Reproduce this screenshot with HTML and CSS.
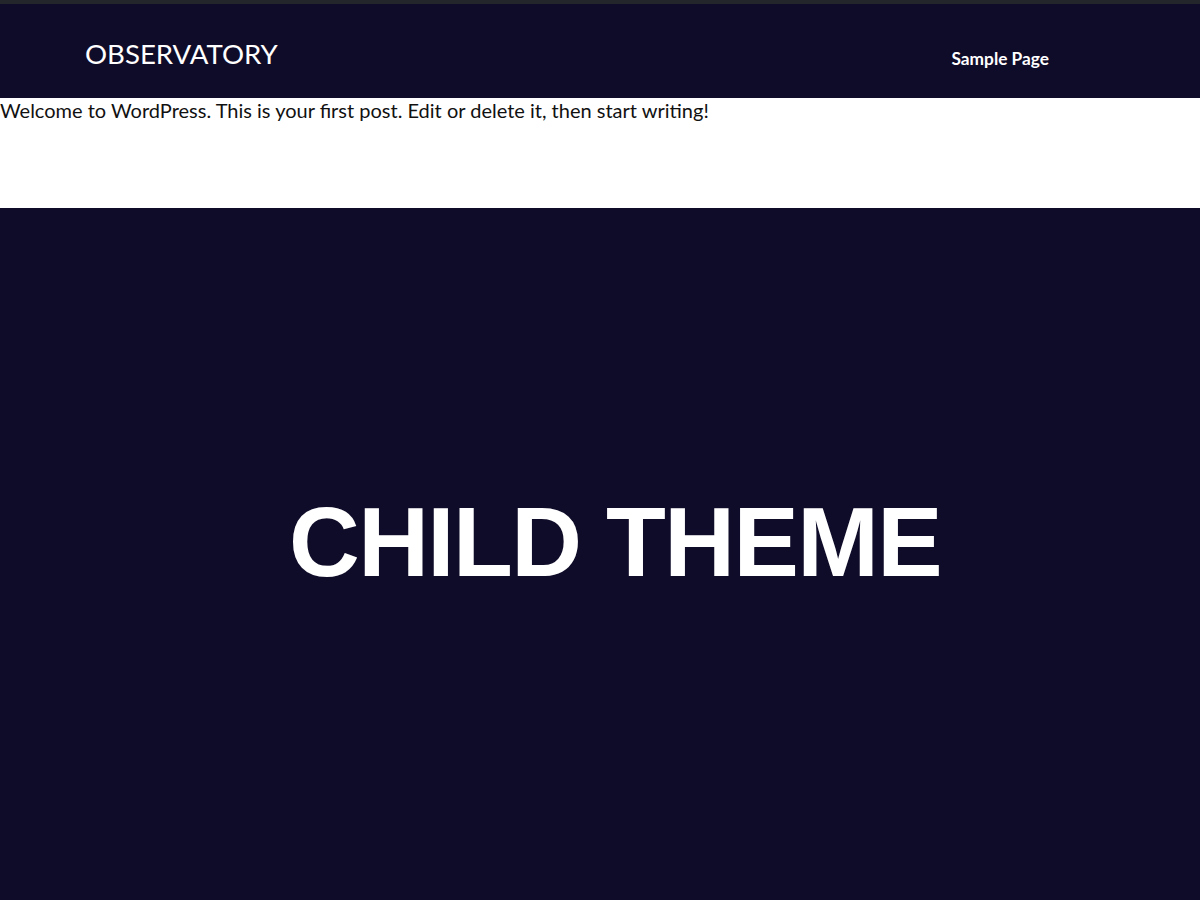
FILE: index.html
```html
<!DOCTYPE html>
<html lang="en">
<head>
<meta charset="utf-8">
<title>Observatory</title>
<link rel="stylesheet" href="styles.css">
</head>
<body>
<div class="topbar"></div>
<header class="site-header">
  <div class="site-title">OBSERVATORY</div>
  <nav class="site-nav"><a href="#">Sample Page</a></nav>
</header>
<main class="content">
  <p class="post">Welcome to WordPress. This is your first post. Edit or delete it, then start writing!</p>
</main>
<section class="hero">
  <h1 class="hero-title">CHILD THEME</h1>
</section>
</body>
</html>
```
FILE: styles.css
```css
html, body {
  margin: 0;
  padding: 0;
}
body {
  font-family: Lato, "Liberation Sans", sans-serif;
  background: #0f0c29;
  height: 900px;
  overflow: hidden;
}
.topbar {
  height: 4px;
  background: #23262b;
}
.site-header {
  height: 94px;
  background: #0f0c29;
  display: flex;
  align-items: flex-start;
  justify-content: space-between;
  padding: 0 151px 0 85px;
}
.site-title {
  color: #ffffff;
  font-size: 27.6px;
  line-height: 34px;
  margin-top: 33px;
}
.site-nav {
  margin-top: 44px;
}
.site-nav a {
  color: #ffffff;
  font-weight: 700;
  font-size: 17.3px;
  text-decoration: none;
}
.content {
  background: #ffffff;
  height: 110px;
}
.post {
  margin: 0;
  color: #111111;
  font-size: 20px;
  line-height: 24px;
}
.hero {
  height: 692px;
  display: flex;
  align-items: center;
  justify-content: center;
}
.hero-title {
  margin: 0 0 24px 30px;
  color: #ffffff;
  font-family: "Liberation Sans", Arial, sans-serif;
  font-weight: 700;
  font-size: 98px;
  letter-spacing: -1.6px;
}
```
